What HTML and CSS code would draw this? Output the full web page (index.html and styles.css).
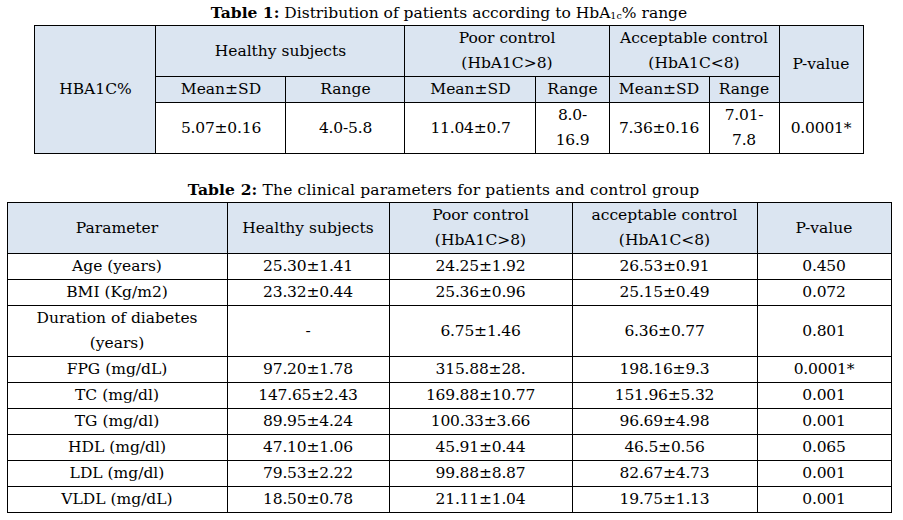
FILE: index.html
```html
<!DOCTYPE html>
<html lang="en">
<head>
<meta charset="utf-8">
<title>Tables</title>
<link rel="stylesheet" href="styles.css">
</head>
<body>
<div class="page">
  <div class="caption caption-1"><b>Table 1:</b> Distribution of patients according to HbA<span class="sub">1c</span>% range</div>
  <table class="grid grid-1">
    <colgroup>
      <col class="c121"><col class="c130"><col class="c119"><col class="c131"><col class="c73"><col class="c100"><col class="c70"><col class="c84">
    </colgroup>
    <tr>
      <th class="head" rowspan="3">HBA1C%</th>
      <th class="head" colspan="2">Healthy subjects</th>
      <th class="head" colspan="2">Poor control<br>(HbA1C&gt;8)</th>
      <th class="head" colspan="2">Acceptable control<br>(HbA1C&lt;8)</th>
      <th class="head" rowspan="2">P-value</th>
    </tr>
    <tr>
      <th class="head">Mean±SD</th>
      <th class="head">Range</th>
      <th class="head">Mean±SD</th>
      <th class="head">Range</th>
      <th class="head">Mean±SD</th>
      <th class="head">Range</th>
    </tr>
    <tr>
      <td class="num">5.07±0.16</td>
      <td class="num">4.0-5.8</td>
      <td class="num">11.04±0.7</td>
      <td class="num">8.0-<br>16.9</td>
      <td class="num">7.36±0.16</td>
      <td class="num">7.01-<br>7.8</td>
      <td class="num">0.0001*</td>
    </tr>
  </table>

  <div class="caption caption-2"><b>Table 2:</b> The clinical parameters for patients and control group</div>
  <table class="grid grid-2">
    <colgroup>
      <col class="c220"><col class="c162"><col class="c183"><col class="c185"><col class="c134">
    </colgroup>
    <tr>
      <th class="head">Parameter</th>
      <th class="head">Healthy subjects</th>
      <th class="head">Poor control<br>(HbA1C&gt;8)</th>
      <th class="head">acceptable control<br>(HbA1C&lt;8)</th>
      <th class="head">P-value</th>
    </tr>
    <tr><td>Age (years)</td><td class="num">25.30±1.41</td><td class="num">24.25±1.92</td><td class="num">26.53±0.91</td><td class="num">0.450</td></tr>
    <tr><td>BMI (Kg/m2)</td><td class="num">23.32±0.44</td><td class="num">25.36±0.96</td><td class="num">25.15±0.49</td><td class="num">0.072</td></tr>
    <tr><td>Duration of diabetes<br>(years)</td><td class="num">-</td><td class="num">6.75±1.46</td><td class="num">6.36±0.77</td><td class="num">0.801</td></tr>
    <tr><td>FPG (mg/dL)</td><td class="num">97.20±1.78</td><td class="num">315.88±28.</td><td class="num">198.16±9.3</td><td class="num">0.0001*</td></tr>
    <tr><td>TC (mg/dl)</td><td class="num">147.65±2.43</td><td class="num">169.88±10.77</td><td class="num">151.96±5.32</td><td class="num">0.001</td></tr>
    <tr><td>TG (mg/dl)</td><td class="num">89.95±4.24</td><td class="num">100.33±3.66</td><td class="num">96.69±4.98</td><td class="num">0.001</td></tr>
    <tr><td>HDL (mg/dl)</td><td class="num">47.10±1.06</td><td class="num">45.91±0.44</td><td class="num">46.5±0.56</td><td class="num">0.065</td></tr>
    <tr><td>LDL (mg/dl)</td><td class="num">79.53±2.22</td><td class="num">99.88±8.87</td><td class="num">82.67±4.73</td><td class="num">0.001</td></tr>
    <tr><td>VLDL (mg/dL)</td><td class="num">18.50±0.78</td><td class="num">21.11±1.04</td><td class="num">19.75±1.13</td><td class="num">0.001</td></tr>
  </table>
</div>
</body>
</html>
```

FILE: styles.css
```css
html, body {
  margin: 0;
  padding: 0;
  background: #ffffff;
}

body {
  font-family: "DejaVu Serif", "Liberation Serif", serif;
  font-size: 15.5px;
  color: #000000;
}

.page {
  display: flex;
  flex-direction: column;
  align-items: center;
  padding-right: 5px;
}

.caption {
  height: 25px;
  line-height: 25px;
  text-align: center;
  white-space: nowrap;
}

.caption b {
  font-weight: bold;
}

.caption-2 {
  margin-top: 23px;
  padding-right: 11px;
  letter-spacing: 0.15px;
}

.sub {
  font-size: 0.62em;
  vertical-align: -1px;
}

.grid {
  border-collapse: collapse;
  table-layout: fixed;
}

.grid-1 { width: 828px; }
.grid-2 { width: 884px; }

.grid th,
.grid td {
  border: 1px solid #000000;
  padding: 0;
  line-height: 25px;
  text-align: center;
  vertical-align: middle;
  font-weight: normal;
  white-space: nowrap;
}

.grid .head {
  background: #dbe5f1;
}

.grid .num {
  letter-spacing: -0.2px;
}

.c121 { width: 121px; }
.c130 { width: 130px; }
.c119 { width: 119px; }
.c131 { width: 131px; }
.c73 { width: 73px; }
.c100 { width: 100px; }
.c70 { width: 70px; }
.c84 { width: 84px; }
.c220 { width: 220px; }
.c162 { width: 162px; }
.c183 { width: 183px; }
.c185 { width: 185px; }
.c134 { width: 134px; }
```
